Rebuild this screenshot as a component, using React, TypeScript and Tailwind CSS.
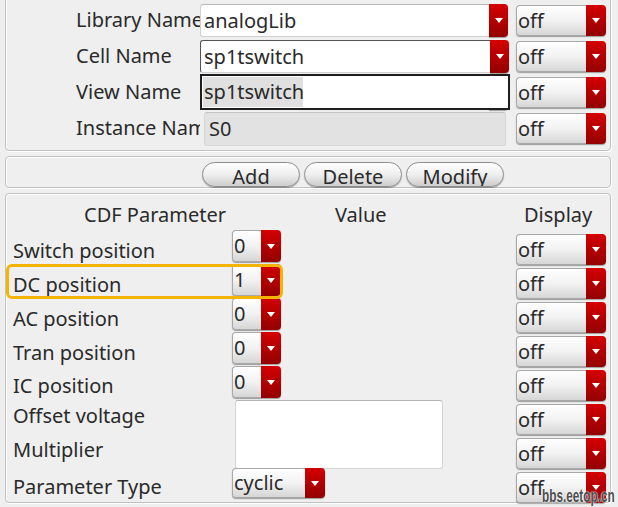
import React from "react";

const Arrow = () => (
  <svg width="8" height="5" viewBox="0 0 8 5" className="block">
    <path d="M0 0 H8 L4 5 Z" fill="#ffffff" />
  </svg>
);

type ComboProps = { text: string; w: number; h: number; className?: string };

const Combo = ({ text, w, h, className = "" }: ComboProps) => (
  <div
    className={`flex shrink-0 rounded-[4px] shadow-[0_1px_1px_rgba(0,0,0,0.35)] ${className}`}
    style={{ width: w, height: h }}
  >
    <div className="flex-1 flex items-center pl-[1px] rounded-l-[4px] border border-r-0 border-[#a8a8a8] bg-gradient-to-b from-white via-[#f2f2f2] to-[#d6d6d6] leading-none overflow-hidden">
      {text}
    </div>
    <div className="w-[20px] flex items-center justify-center rounded-r-[4px] bg-gradient-to-b from-[#d60000] to-[#930000]">
      <Arrow />
    </div>
  </div>
);

const TextField = ({ text, w, h }: { text: string; w: number; h: number }) => (
  <div
    className="flex items-center pl-[4px] leading-none rounded-[3px] border border-[#d6d6d6] border-t-[#c4c4c4] bg-[#e2e2e2]"
    style={{ width: w, height: h }}
  >
    {text}
  </div>
);

const TextCombo = ({ text, w, h, dark }: { text: string; w: number; h: number; dark?: boolean }) => (
  <div className="flex shrink-0" style={{ width: w, height: h }}>
    <div
      className={`flex-1 flex items-center pl-[3px] leading-none bg-white rounded-l-[3px] border border-r-0 ${
        dark ? "border-[#555] border-b-[#d0d0d0]" : "border-[#d0d0d0] border-t-[#b8b8b8]"
      }`}
    >
      {text}
    </div>
    <div className="w-[19px] flex items-center justify-center rounded-r-[4px] bg-gradient-to-b from-[#d60000] to-[#930000] shadow-[0_1px_1px_rgba(0,0,0,0.35)]">
      <Arrow />
    </div>
  </div>
);

const PushButton = ({ label }: { label: string }) => (
  <div className="w-[98px] h-[25px] flex justify-center pt-[4px] leading-none overflow-hidden rounded-full border border-[#8e8e8e] bg-gradient-to-b from-white via-[#efefef] to-[#cdcdcd] shadow-[0_1px_1px_rgba(0,0,0,0.3)]">
    {label}
  </div>
);

const params = [
  { label: "Switch position", value: "0", pt: 11 },
  { label: "DC position", value: "1", pt: 11 },
  { label: "AC position", value: "0", pt: 11 },
  { label: "Tran position", value: "0", pt: 11 },
  { label: "IC position", value: "0", pt: 10 },
  { label: "Offset voltage", value: "field", pt: 6 },
  { label: "Multiplier", value: null, pt: 6 },
  { label: "Parameter Type", value: "cyclic", pt: 9 },
];

const panel =
  "rounded-[4px] border border-[#c2c2c2] shadow-[inset_1px_1px_0_#ffffff,1px_1px_0_#ffffff]";

export default function App() {
  return (
    <div className="relative w-[618px] h-[507px] overflow-hidden bg-[#efefef] text-[20px] text-[#2a2a2a] font-['Noto_Sans',sans-serif]">
      <div className="flex flex-col gap-[5px] pl-[5px] pr-[7px]">
        {/* cell identification */}
        <div className={`${panel} relative -mt-[10px] pt-[12px] pb-[3px]`}>
          {[
            { label: "Library Name", kind: "lib" },
            { label: "Cell Name", kind: "cell" },
            { label: "View Name", kind: "view" },
            { label: "Instance Name", kind: "inst" },
          ].map((r) => (
            <div key={r.label} className="flex h-[36px]">
              <div className="w-[194px] pl-[70px] pt-[7px] leading-none whitespace-nowrap overflow-hidden">
                {r.label}
              </div>
              <div className="w-[316px] pt-[1px]">
                {r.kind === "lib" && <TextCombo text="analogLib" w={308} h={33} />}
                {r.kind === "cell" && <TextCombo text="sp1tswitch" w={309} h={33} dark />}
                {r.kind === "view" && <TextCombo text="" w={308} h={34} />}
                {r.kind === "inst" && (
                  <div className="pl-[4px]">
                    <TextField text="S0" w={302} h={34} />
                  </div>
                )}
              </div>
              <Combo text="off" w={90} h={31} className="mt-[2px]" />
            </div>
          ))}
          <div className="absolute left-[194px] top-[83px] w-[310px] h-[36px] bg-white border-2 border-[#1e1e1e] p-[1px]">
            <div className="w-[100px] h-[30px] bg-[#e0e0e0] flex items-center pl-[1px] leading-none">
              sp1tswitch
            </div>
          </div>
        </div>

        {/* buttons */}
        <div className={`${panel} h-[32px] flex items-center gap-[4px] pl-[196px] pt-[4px]`}>
          <PushButton label="Add" />
          <PushButton label="Delete" />
          <PushButton label="Modify" />
        </div>

        {/* CDF parameters */}
        <div className={`${panel} h-[310px]`}>
          <div className="flex h-[36px] pt-[11px] leading-none">
            <div className="w-[329px] pl-[78px]">CDF Parameter</div>
            <div className="w-[189px]">Value</div>
            <div>Display</div>
          </div>
          <div className="grid grid-cols-[226px_284px_90px] grid-rows-[repeat(8,34px)]">
            {params.map((p, i) => (
              <React.Fragment key={p.label}>
                <div className="relative pl-[7px] leading-none whitespace-nowrap" style={{ paddingTop: p.pt }}>
                  {p.label}
                  {i === 1 && (
                    <div className="absolute left-0 top-0 w-[277px] h-[35px] rounded-[6px] border-[3px] border-[#f6b400] pointer-events-none" />
                  )}
                </div>
                {p.value === "field" && (
                  <div className="row-span-2 pl-[3px]">
                    <div className="w-[208px] h-[69px] bg-white rounded-[3px] border border-[#d4d4d4] border-t-[#b5b5b5]" />
                  </div>
                )}
                {p.value === "cyclic" && (
                  <div>
                    <Combo text="cyclic" w={93} h={30} />
                  </div>
                )}
                {p.value !== null && p.value !== "field" && p.value !== "cyclic" && (
                  <div>
                    <Combo text={p.value} w={49} h={32} />
                  </div>
                )}
                <div className="col-start-3">
                  <Combo text="off" w={90} h={31} className="mt-[4px]" />
                </div>
              </React.Fragment>
            ))}
          </div>
        </div>
      </div>

      <div className="absolute left-[542px] top-[486px] origin-left scale-x-[0.62] text-[19px] font-bold leading-none text-[#4d4d4d] font-['Liberation_Sans',sans-serif] [text-shadow:0_0_2px_#fff,0_0_2px_#fff]">
        bbs.eetop.cn
      </div>
    </div>
  );
}
